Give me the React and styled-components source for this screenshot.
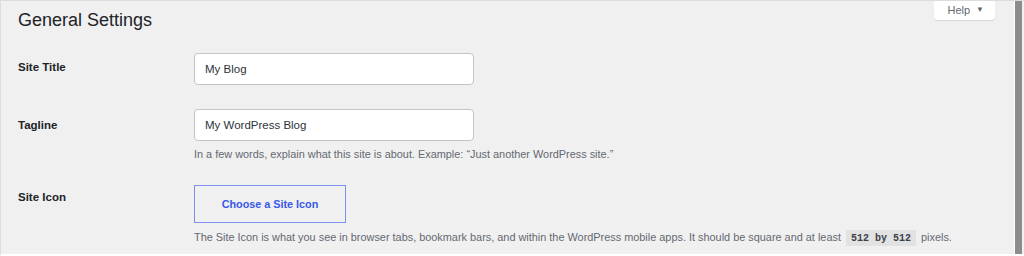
import React from 'react';
import styled, { createGlobalStyle } from 'styled-components';

const GlobalStyle = createGlobalStyle`
  html, body {
    margin: 0;
    padding: 0;
    background: #ffffff;
  }
  body {
    font-family: "Liberation Sans", Arial, sans-serif;
    color: #1d2327;
  }
`;

const Frame = styled.div`
  display: flex;
  width: 1024px;
  height: 256px;
  box-sizing: border-box;
  border-top: 1px solid #dcdcde;
  border-left: 1px solid #dcdcde;
  border-bottom: 2px solid #ffffff;
  background: #f0f0f1;
  overflow: hidden;
`;

const Main = styled.main`
  position: relative;
  flex: 1;
  padding: 0 17px;
`;

const Scrollbar = styled.div`
  width: 7px;
  margin: 0 2px 0 1px;
  background: #8c8c8c;
  border-left: 1px solid #ffffff;
  flex-shrink: 0;
`;

const HelpButton = styled.button`
  position: absolute;
  top: -1px;
  right: 18px;
  height: 20px;
  padding: 0 11px 0 13px;
  border: none;
  border-radius: 0 0 4px 4px;
  background: #ffffff;
  box-shadow: 0 1px 1px rgba(0, 0, 0, 0.1);
  font-family: inherit;
  font-size: 11px;
  color: #646970;
  display: flex;
  align-items: center;
  gap: 6px;
`;

const Caret = styled.span`
  font-size: 8px;
  line-height: 1;
`;

const Heading = styled.h1`
  margin: 0;
  padding-top: 6px;
  font-size: 18px;
  font-weight: 400;
  line-height: 27px;
  color: #1d2327;
`;

const FormTable = styled.div`
  display: grid;
  grid-template-columns: 176px 1fr;
  margin-top: 19px;
  row-gap: 24px;
`;

const Label = styled.label`
  padding-top: ${p => p.$offset}px;
  font-size: 11.5px;
  font-weight: 700;
  line-height: 20px;
  color: #1d2327;
`;

const Field = styled.div`
  display: flex;
  flex-direction: column;
  align-items: flex-start;
`;

const TextInput = styled.input`
  width: 280px;
  height: 32px;
  box-sizing: border-box;
  padding: 0 10px;
  border: 1px solid #c3c4c7;
  border-radius: 4px;
  background: #ffffff;
  font-family: inherit;
  font-size: 11.5px;
  color: #2c3338;
  outline: none;
`;

const Description = styled.p`
  margin: ${p => p.$top}px 0 0;
  font-size: 10.9px;
  line-height: 18px;
  color: #646970;
`;

const IconButton = styled.button`
  width: 152px;
  height: 38px;
  margin-top: -2px;
  border: 1px solid #7f8ff0;
  border-radius: 0;
  background: transparent;
  font-family: inherit;
  font-size: 10.8px;
  font-weight: 700;
  color: #3858e9;
`;

const Code = styled.code`
  padding: 3px 5px 2px;
  margin: 0 2px;
  background: #e2e2e3;
  font-family: "Liberation Mono", monospace;
  font-size: 10px;
  font-weight: 700;
  color: #3c434a;
`;

export default function App() {
  return (
    <>
      <GlobalStyle />
      <Frame>
        <Main>
          <HelpButton>
            Help <Caret>▼</Caret>
          </HelpButton>
          <Heading>General Settings</Heading>
          <FormTable>
            <Label $offset={4}>Site Title</Label>
            <Field>
              <TextInput defaultValue="My Blog" />
            </Field>

            <Label $offset={6}>Tagline</Label>
            <Field>
              <TextInput defaultValue="My WordPress Blog" />
              <Description $top={4}>
                In a few words, explain what this site is about. Example: “Just another WordPress site.”
              </Description>
            </Field>

            <Label $offset={0}>Site Icon</Label>
            <Field>
              <IconButton>Choose a Site Icon</IconButton>
              <Description $top={5}>
                The Site Icon is what you see in browser tabs, bookmark bars, and within the WordPress mobile apps. It should be square and at least <Code>512 by 512</Code> pixels.
              </Description>
            </Field>
          </FormTable>
        </Main>
        <Scrollbar />
      </Frame>
    </>
  );
}
